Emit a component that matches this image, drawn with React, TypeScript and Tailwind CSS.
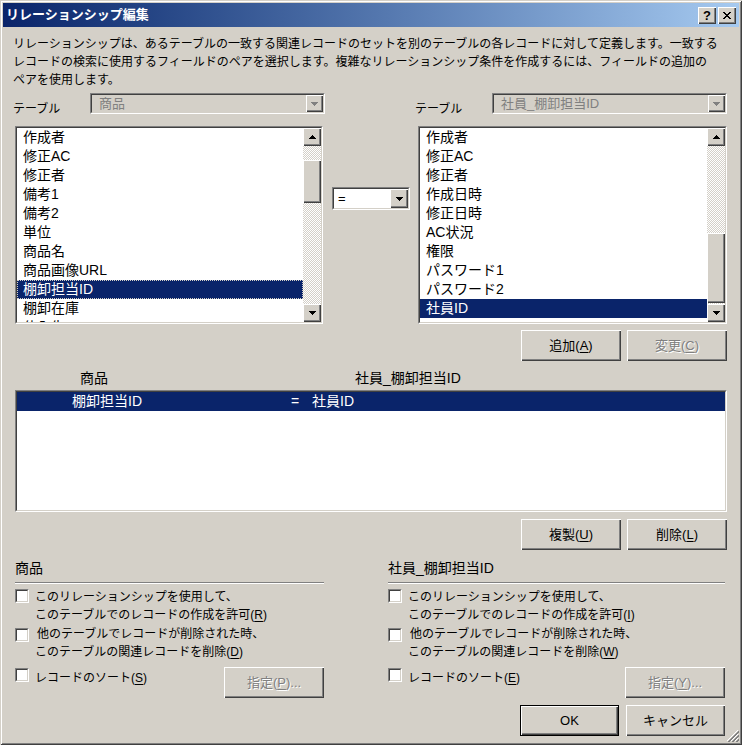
import React from "react";

const raised =
  "bg-[#d4d0c8] shadow-[inset_1px_1px_0_#fff,inset_-1px_-1px_0_#404040,inset_-2px_-2px_0_#808080]";
const dim = "text-[#808080] [text-shadow:1px_1px_0_#fff]";

const leftFields = ["作成者", "修正AC", "修正者", "備考1", "備考2", "単位", "商品名", "商品画像URL", "棚卸担当ID", "棚卸在庫", "仕入先ID"];
const rightFields = ["作成者", "修正AC", "修正者", "作成日時", "修正日時", "AC状況", "権限", "パスワード1", "パスワード2", "社員ID"];

const Tri = ({ up = false, color = "#000" }: { up?: boolean; color?: string }) => (
  <svg width="7" height="4" viewBox="0 0 7 4" shapeRendering="crispEdges">
    <polygon points={up ? "3.5,0 7,4 0,4" : "0,0 7,0 3.5,4"} fill={color} />
  </svg>
);

const Key = ({ k }: { k: string }) => <span className="underline underline-offset-2">{k}</span>;

function Sunken({ className = "", inner = "", children }: { className?: string; inner?: string; children?: React.ReactNode }) {
  return (
    <div className={`border border-t-[#808080] border-l-[#808080] border-b-white border-r-white ${className}`}>
      <div className={`h-full border border-t-[#404040] border-l-[#404040] border-b-[#d4d0c8] border-r-[#d4d0c8] ${inner}`}>
        {children}
      </div>
    </div>
  );
}

function Btn({ text, k, tail = "", disabled = false, className = "w-[100px]" }: { text: string; k: string; tail?: string; disabled?: boolean; className?: string }) {
  return (
    <div className={`h-[31px] flex items-center justify-center text-[13px] ${raised} ${disabled ? dim : "text-black"} ${className}`}>
      {text}(<Key k={k} />){tail}
    </div>
  );
}

function Combo({ value, disabled = false }: { value: string; disabled?: boolean }) {
  return (
    <Sunken className="w-[235px] h-full" inner={`flex ${disabled ? "bg-[#d4d0c8]" : "bg-white"}`}>
      <div className={`flex-1 pl-[7px] text-[13px] leading-[17px] ${disabled ? "text-[#808080]" : "text-black"}`}>{value}</div>
      <div className={`w-[17px] h-full flex items-center justify-center ${raised}`}>
        <Tri color="#808080" />
      </div>
    </Sunken>
  );
}

function ScrollBar({ thumb }: { thumb: string }) {
  return (
    <div className="w-[18px] h-full flex flex-col shrink-0 bg-[image:repeating-conic-gradient(#fff_0_25%,#d4d0c8_0_50%)] bg-[length:2px_2px]">
      <div className={`h-[18px] shrink-0 flex items-center justify-center ${raised}`}>
        <Tri up />
      </div>
      <div className="flex-1 min-h-0">
        <div className={`${raised} ${thumb}`} />
      </div>
      <div className={`h-[18px] shrink-0 flex items-center justify-center ${raised}`}>
        <Tri />
      </div>
    </div>
  );
}

function FieldList({ items, selected, focus, thumb, className }: { items: string[]; selected: number; focus?: boolean; thumb: string; className: string }) {
  return (
    <Sunken className={`h-full ${className}`} inner="flex bg-white overflow-hidden">
      <div className="flex-1 overflow-hidden text-[14px] leading-[19px]">
        {items.map((it, i) => (
          <div
            key={it}
            className={`h-[19px] pl-[6px] whitespace-nowrap ${
              i === selected ? "bg-[#0a246a] text-white" : "text-black"
            } ${i === selected && focus ? "outline-1 outline-dotted -outline-offset-1 outline-[#d4d0c8]" : ""}`}
          >
            {it}
          </div>
        ))}
      </div>
      <ScrollBar thumb={thumb} />
    </Sunken>
  );
}

function Check() {
  return <Sunken className="w-[14px] h-[14px] shrink-0" inner="bg-white" />;
}

function Options({ title, keys, spec }: { title: string; keys: [string, string, string]; spec: string }) {
  return (
    <div className="flex flex-col">
      <div className="h-[18px] text-[14px] leading-[18px]">{title}</div>
      <div className="mt-[5px] h-[2px] border-t border-t-[#808080] border-b border-b-white" />
      <div className="mt-[4px] flex text-[12px] leading-[18px]">
        <div className="mt-[1px]"><Check /></div>
        <div className="ml-[6px]">
          <div>このリレーションシップを使用して、</div>
          <div>このテーブルでのレコードの作成を許可(<Key k={keys[0]} />)</div>
        </div>
      </div>
      <div className="mt-[1px] flex text-[12px] leading-[18px]">
        <div className="mt-[3px]"><Check /></div>
        <div className="ml-[6px]">
          <div className="pl-[2px]">他のテーブルでレコードが削除された時、</div>
          <div>このテーブルの関連レコードを削除(<Key k={keys[1]} />)</div>
        </div>
      </div>
      <div className="mt-[6px] flex items-start text-[12px] leading-[18px]">
        <div className="mt-[1px]"><Check /></div>
        <div className="ml-[6px] mt-[2px]">レコードのソート(<Key k={keys[2]} />)</div>
        <Btn text="指定" k={spec} tail="..." disabled className="w-[100px] ml-auto" />
      </div>
    </div>
  );
}

export default function App() {
  return (
    <div className="relative w-[742px] h-[745px] p-[3px] bg-[#d4d0c8] text-black font-['Liberation_Sans','Noto_Sans_CJK_JP',sans-serif] shadow-[inset_1px_1px_0_#d4d0c8,inset_-1px_-1px_0_#404040,inset_2px_2px_0_#fff,inset_-2px_-2px_0_#808080] overflow-hidden select-none">
      {/* title bar */}
      <div className="h-[24px] flex items-center pl-[3px] pr-[3px] bg-linear-to-r from-[#0a246a] to-[#a6caf0]">
        <div className="flex-1 text-white font-bold text-[13px]">リレーションシップ編集</div>
        <div className={`w-[18px] h-[17px] flex items-center justify-center text-[13px] font-bold leading-none ${raised}`}>?</div>
        <div className={`ml-[2px] w-[18px] h-[17px] flex items-center justify-center ${raised}`}>
          <svg width="8" height="7" viewBox="0 0 8 7" shapeRendering="crispEdges">
            <path d="M0 0h2v1h-2zM6 0h2v1h-2zM1 1h2v1h-2zM5 1h2v1h-2zM2 2h4v1h-4zM3 3h2v1h-2zM2 4h4v1h-4zM1 5h2v1h-2zM5 5h2v1h-2zM0 6h2v1h-2zM6 6h2v1h-2z" fill="#000" />
          </svg>
        </div>
      </div>

      <div className="px-[12px]">
        <div className="ml-[-2px] mt-[8px] text-[12px] leading-[18px] whitespace-nowrap">
          リレーションシップは、あるテーブルの一致する関連レコードのセットを別のテーブルの各レコードに対して定義します。一致する
          <br />
          レコードの検索に使用するフィールドのペアを選択します。複雑なリレーションシップ条件を作成するには、フィールドの追加の
          <br />
          ペアを使用します。
        </div>

        <div className="mt-[4px] flex h-[21px]">
          <div className="ml-[-2px] w-[77px] pt-[7px] text-[12px] leading-[18px]">テーブル</div>
          <Combo value="商品" disabled />
          <div className="ml-[90px] w-[77px] pt-[7px] text-[12px] leading-[18px]">テーブル</div>
          <Combo value="社員_棚卸担当ID" disabled />
        </div>

        <div className="mt-[12px] flex h-[198px]">
          <FieldList items={leftFields} selected={8} focus thumb="mt-[14px] h-[43px]" className="w-[308px]" />
          <Sunken className="ml-[9px] mt-[61px] w-[78px] h-[23px]" inner="flex bg-white">
            <div className="flex-1 pl-[4px] text-[13px] leading-[19px]">=</div>
            <div className={`w-[18px] h-full flex items-center justify-center ${raised}`}>
              <Tri />
            </div>
          </Sunken>
          <FieldList items={rightFields} selected={9} thumb="mt-[87px] h-[70px]" className="ml-[8px] w-[309px]" />
        </div>

        <div className="mt-[6px] flex justify-end gap-[6px]">
          <Btn text="追加" k="A" />
          <Btn text="変更" k="C" disabled />
        </div>

        <div className="mt-[8px] flex h-[18px] text-[14px] leading-[18px]">
          <div className="w-[340px] pl-[65px]">商品</div>
          <div>社員_棚卸担当ID</div>
        </div>

        <Sunken className="mt-[3px] h-[122px]" inner="bg-white">
          <div className="h-[19px] flex bg-[#0a246a] text-white text-[14px] leading-[19px] whitespace-nowrap">
            <div className="w-[274px] pl-[55px]">棚卸担当ID</div>
            <div className="w-[21px]">=</div>
            <div>社員ID</div>
          </div>
        </Sunken>

        <div className="mt-[7px] flex justify-end gap-[6px]">
          <Btn text="複製" k="U" />
          <Btn text="削除" k="L" />
        </div>

        <div className="mt-[9px] flex">
          <div className="w-[309px]">
            <Options title="商品" keys={["R", "D", "S"]} spec="P" />
          </div>
          <div className="ml-[64px] w-[337px]">
            <Options title="社員_棚卸担当ID" keys={["I", "W", "E"]} spec="Y" />
          </div>
        </div>

        <div className="mt-[7px] pr-[2px] flex justify-end gap-[7px]">
          <div className="w-[99px] h-[31px] border border-black">
            <div className={`h-full flex items-center justify-center text-[13px] ${raised}`}>OK</div>
          </div>
          <div className={`w-[99px] h-[31px] flex items-center justify-center text-[13px] ${raised}`}>キャンセル</div>
        </div>
      </div>

      {/* size grip */}
      <svg className="absolute right-[3px] bottom-[3px]" width="12" height="12" viewBox="0 0 12 12" shapeRendering="crispEdges">
        <path d="M11 0L0 11M11 4L4 11M11 8L8 11" stroke="#fff" strokeWidth="1" />
        <path d="M12 1L1 12M12 2L2 12M12 5L5 12M12 6L6 12M12 9L9 12M12 10L10 12" stroke="#808080" strokeWidth="1" />
      </svg>
    </div>
  );
}
